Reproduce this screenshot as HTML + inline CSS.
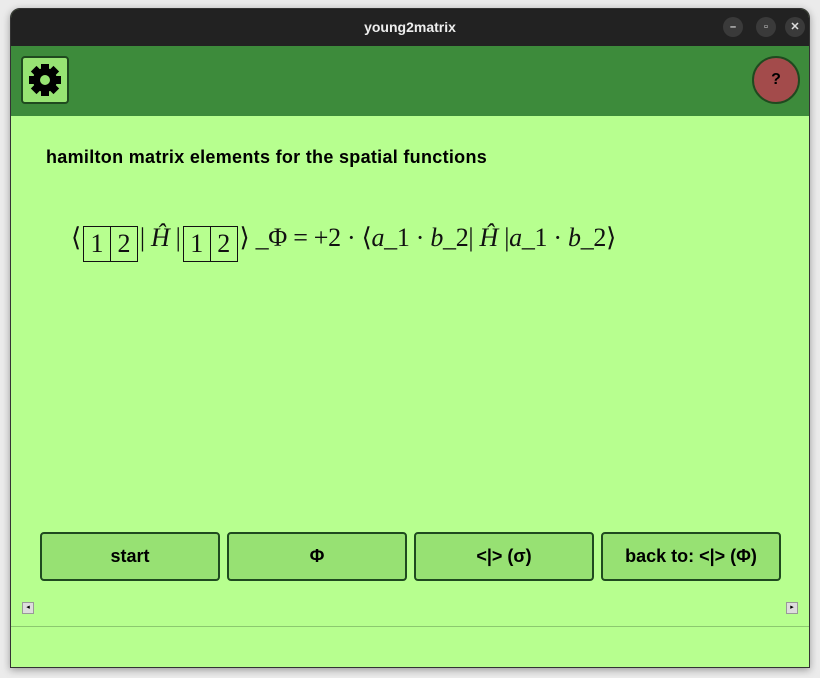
<!DOCTYPE html>
<html><head><meta charset="utf-8"><style>
body{margin:0;width:820px;height:678px;background:#ebebeb;position:relative;overflow:hidden;font-family:"Liberation Sans",sans-serif}
.win{position:absolute;left:10px;top:8px;width:800px;height:660px;background:#b7ff8f;border-radius:10px 10px 0 0;overflow:hidden;box-shadow:0 2px 8px rgba(0,0,0,.35);border:1px solid #333;box-sizing:border-box}
.tb{position:absolute;left:0;top:0;width:100%;height:37px;background:#222;color:#eee;font-weight:bold;font-size:14px;text-align:center;line-height:37px}
.wb{position:absolute;top:8px;width:20px;height:20px;border-radius:50%;background:#3a3a3a;color:#ddd;font-size:11px;line-height:20px;text-align:center}
.bar{position:absolute;left:0;top:37px;width:100%;height:70px;background:#3d8b3b}
.gear{position:absolute;left:10px;top:10px;width:48px;height:48px;background:#97e473;border:2px solid #1f4a1f;border-radius:4px;box-sizing:border-box}
.help{position:absolute;right:9px;top:10px;width:48px;height:48px;border-radius:50%;background:#a34b4b;border:2px solid #1f4a1f;box-sizing:border-box;text-align:center;line-height:44px;font-weight:bold;font-size:16px}
h1{position:absolute;left:35px;top:138px;margin:0;font-size:18px;font-weight:bold;color:#000;letter-spacing:0.3px}
.math{position:absolute;left:60px;top:214px;font-family:"Liberation Serif",serif;font-size:26px;white-space:nowrap;color:#111;letter-spacing:-0.3px}
.yb{display:inline-block;border:1px solid #111;height:34px;vertical-align:-6px;line-height:34px;margin:0 2px}
.yb span{display:inline-block;width:26px;text-align:center}
.yb span+span{border-left:1px solid #111}
.btn{position:absolute;top:523px;width:180px;height:49px;background:#97e173;border:2px solid #1f4a1f;border-radius:4px;box-sizing:border-box;text-align:center;line-height:45px;font-weight:bold;font-size:18px}
.sc{position:absolute;top:593px;width:12px;height:12px;background:#ddd;border:1px solid #999;box-sizing:border-box;font-size:7px;line-height:10px;text-align:center}
.line{position:absolute;left:0;top:617px;width:100%;height:1px;background:#8cc96f}
</style></head><body>
<div class="win">
<div class="tb">young2matrix
<div class="wb" style="right:66px">–</div><div class="wb" style="right:33px">▫</div><div class="wb" style="right:4px">✕</div></div>
<div class="bar">
<div class="gear"><svg width="44" height="44" viewBox="0 0 44 44"><g transform="translate(22,22)" fill="#000"><rect x="-4" y="-16" width="8" height="32"/><rect x="-4" y="-16" width="8" height="32" transform="rotate(45)"/><rect x="-4" y="-16" width="8" height="32" transform="rotate(90)"/><rect x="-4" y="-16" width="8" height="32" transform="rotate(135)"/><circle r="12"/><circle r="5" fill="#97e473"/></g></svg></div>
<div class="help">?</div>
</div>
<h1>hamilton matrix elements for the spatial functions</h1>
<div class="math">⟨<span class="yb"><span>1</span><span>2</span></span>| <i>Ĥ</i> |<span class="yb"><span>1</span><span>2</span></span>⟩ _Φ = +2 · ⟨<i>a</i>_1 · <i>b</i>_2| <i>Ĥ</i> |<i>a</i>_1 · <i>b</i>_2⟩</div>
<div class="btn" style="left:29px">start</div>
<div class="btn" style="left:216px">Φ</div>
<div class="btn" style="left:403px">&lt;|&gt; (σ)</div>
<div class="btn" style="left:590px">back to: &lt;|&gt; (Φ)</div>
<div class="sc" style="left:11px">◂</div><div class="sc" style="left:775px">▸</div>
<div class="line"></div>
</div>
</body></html>
